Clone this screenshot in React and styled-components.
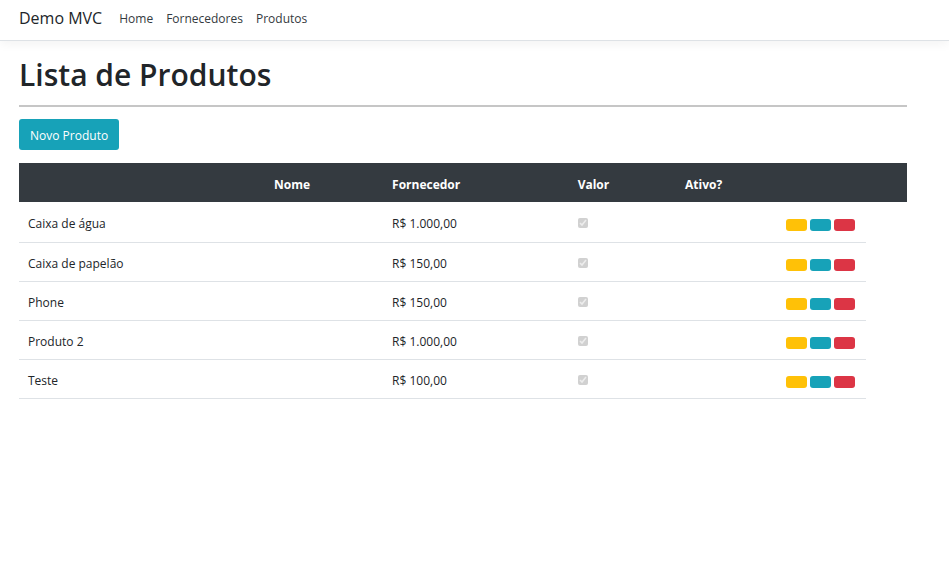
import React from "react";
import styled, { createGlobalStyle } from "styled-components";

const GlobalStyle = createGlobalStyle`
  *, *::before, *::after { box-sizing: border-box; }
  body {
    margin: 0;
    background: #fff;
    color: #212529;
    font-family: "Segoe UI", "Open Sans", "Noto Sans", sans-serif;
    font-size: 12px;
    line-height: 20px;
  }
`;

const Navbar = styled.nav`
  display: flex;
  align-items: center;
  gap: 17px;
  height: 41px;
  padding: 0 19px 4px;
  border-bottom: 1px solid #dee2e6;
  box-shadow: 0 3px 10px rgba(0, 0, 0, 0.05);
`;

const Brand = styled.a`
  color: #212529;
  font-size: 16px;
  text-decoration: none;
`;

const NavList = styled.ul`
  display: flex;
  gap: 13px;
  margin: 0;
  padding: 1px 0 0;
  list-style: none;
`;

const NavLink = styled.a`
  color: #343a40;
  text-decoration: none;
`;

const Main = styled.main`
  padding: 14px 42px 0 19px;
`;

const Title = styled.h1`
  margin: 0;
  font-size: 30px;
  font-weight: 600;
  line-height: 40px;
`;

const Divider = styled.hr`
  height: 2px;
  margin: 10px 0 12px;
  border: 0;
  background: #c6c6c6;
`;

const CreateLink = styled.a`
  display: inline-flex;
  align-items: center;
  height: 31px;
  padding: 2px 11px 0;
  border-radius: 3px;
  background: #17a2b8;
  color: #fff;
  text-decoration: none;
`;

const Table = styled.table`
  width: 100%;
  margin-top: 13px;
  border-spacing: 0;
  table-layout: fixed;
`;

const Column = styled.col`
  width: ${({ $width }) => $width};
`;

const HeadCell = styled.th`
  height: 39px;
  padding: 4px 9px 0;
  background: #343a40;
  color: #fff;
  font-weight: 700;
  text-align: left;
`;

const Cell = styled.td`
  height: ${({ $first }) => ($first ? "41px" : "39px")};
  padding: 3px 9px 0;
  border-bottom: 1px solid #dee2e6;
  white-space: nowrap;
`;

const Check = styled.input`
  display: block;
  width: 10px;
  height: 10px;
  margin: 0 0 2px;
`;

const Actions = styled.div`
  display: flex;
  gap: 3px;
  padding-top: 2px;
`;

const colors = { edit: "#ffc107", details: "#17a2b8", remove: "#dc3545" };

const Action = styled.a`
  width: 21px;
  height: 12px;
  border-radius: 3px;
  background: ${({ $kind }) => colors[$kind]};
`;

const widths = ["27.7%", "13.3%", "20.9%", "12.1%", "11.4%", "10%", "4.6%"];
const headings = ["", "Nome", "Fornecedor", "Valor", "Ativo?", "", ""];
const products = [
  { name: "Caixa de água", price: "R$ 1.000,00" },
  { name: "Caixa de papelão", price: "R$ 150,00" },
  { name: "Phone", price: "R$ 150,00" },
  { name: "Produto 2", price: "R$ 1.000,00" },
  { name: "Teste", price: "R$ 100,00" },
];

export default function App() {
  return (
    <>
      <GlobalStyle />
      <Navbar>
        <Brand href="#">Demo MVC</Brand>
        <NavList>
          <li><NavLink href="#home">Home</NavLink></li>
          <li><NavLink href="#fornecedores">Fornecedores</NavLink></li>
          <li><NavLink href="#produtos">Produtos</NavLink></li>
        </NavList>
      </Navbar>
      <Main>
        <Title>Lista de Produtos</Title>
        <Divider />
        <CreateLink href="#novo">Novo Produto</CreateLink>
        <Table>
          <colgroup>
            {widths.map((width, i) => <Column key={i} $width={width} />)}
          </colgroup>
          <thead>
            <tr>
              {headings.map((text, i) => <HeadCell key={i}>{text}</HeadCell>)}
            </tr>
          </thead>
          <tbody>
            {products.map(({ name, price }, i) => (
              <tr key={name}>
                <Cell $first={i === 0}>{name}</Cell>
                <Cell />
                <Cell>{price}</Cell>
                <Cell>
                  <Check type="checkbox" checked disabled readOnly aria-label={`${name} ativo`} />
                </Cell>
                <Cell />
                <Cell>
                  <Actions>
                    <Action href="#editar" $kind="edit" aria-label={`Editar ${name}`} />
                    <Action href="#detalhes" $kind="details" aria-label={`Detalhes de ${name}`} />
                    <Action href="#excluir" $kind="remove" aria-label={`Excluir ${name}`} />
                  </Actions>
                </Cell>
              </tr>
            ))}
          </tbody>
        </Table>
      </Main>
    </>
  );
}
